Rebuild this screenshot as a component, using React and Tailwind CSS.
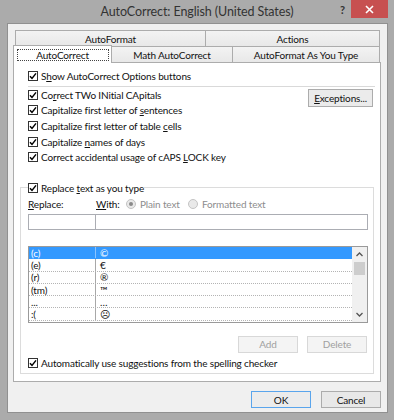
import React from "react";

function Box() {
  return (
    <span className="w-[10px] h-[10px] border border-[#333333] bg-white flex items-center justify-center shrink-0">
      <svg width="8" height="8" viewBox="0 0 8 8">
        <path d="M1 4.2 L3 6.4 L7 1.4" fill="none" stroke="#000" strokeWidth="1.5" />
      </svg>
    </span>
  );
}

function Check({ children, h = "h-[15.6px]" }) {
  return (
    <div className={"flex items-center " + h}>
      <Box />
      <span className="ml-[3px] leading-none whitespace-nowrap">{children}</span>
    </div>
  );
}

function Radio({ on }) {
  return (
    <span className="w-[10px] h-[10px] rounded-full border border-[#c4c4c4] bg-[#e9e9e9] flex items-center justify-center shrink-0">
      {on && <span className="w-[4px] h-[4px] rounded-full bg-[#8a8a8a]" />}
    </span>
  );
}

const rows = [
  ["(c)", "©"],
  ["(e)", "€"],
  ["(r)", "®"],
  ["(tm)", "™"],
  ["...", "…"],
  [":(", "☹"],
];

function Chevron({ up }) {
  return (
    <svg width="7" height="5" viewBox="0 0 7 5">
      <path d={up ? "M0.5 4 L3.5 1 L6.5 4" : "M0.5 1 L3.5 4 L6.5 1"} fill="none" stroke="#555" strokeWidth="1.3" />
    </svg>
  );
}

export default function App() {
  const tab = "border border-b-0 border-[#acacac] bg-linear-to-b from-[#f3f3f3] to-[#e8e8e8] flex items-center justify-center leading-none";
  return (
    <div className="w-[394px] h-[420px] bg-[#ababab] flex flex-col font-['Lato',sans-serif] text-[10px] tracking-[-0.15px] text-[#111]">
      {/* title bar */}
      <div className="h-[23px] grid grid-cols-[1fr_auto_1fr] items-start">
        <div />
        <div className="pt-[6px] text-[12.5px] tracking-[-0.1px] text-[#333] leading-none whitespace-nowrap">
          AutoCorrect: English (United States)
        </div>
        <div className="flex justify-end items-start pr-[6px]">
          <span className="mt-[4px] mr-[6px] text-[11px] font-bold text-[#333] leading-none">?</span>
          <div className="w-[37px] h-[18px] bg-[#c75050] flex items-center justify-center">
            <svg width="9" height="9" viewBox="0 0 9 9">
              <path d="M1 1 L8 8 M8 1 L1 8" stroke="#fff" strokeWidth="1.6" />
            </svg>
          </div>
        </div>
      </div>

      {/* content */}
      <div className="ml-[7px] w-[381px] h-[390px] border border-[#909090] bg-[#f0f0f0] pt-[6px] pl-[5px]">
        <div className="w-[368px]">
          {/* tab row 1 */}
          <div className="flex h-[16px] pl-[2px]">
            <div className={tab + " w-[191px]"}>AutoFormat</div>
            <div className={tab + " w-[174px] border-l-0"}>Actions</div>
          </div>
          {/* tab row 2 */}
          <div className="flex h-[16px] items-end">
            <div className="relative z-10 -mb-px w-[99px] h-[18px] bg-white border border-b-0 border-[#acacac] flex items-center justify-center">
              <span className="w-[92px] h-[12px] border border-dotted border-[#444] flex items-center justify-center leading-none">
                AutoCorrect
              </span>
            </div>
            <div className={tab + " w-[121px] h-[16px] border-l-0"}>Math AutoCorrect</div>
            <div className={tab + " w-[147px] h-[16px] border-l-0"}>AutoFormat As You Type</div>
          </div>
          {/* panel */}
          <div className="h-[320px] border border-[#acacac] bg-white pt-[5px] flex flex-col">
            <div className="pl-[14px]">
              <Check h="h-[16px]">
                S<u>h</u>ow AutoCorrect Options buttons
              </Check>
            </div>
            <div className="mt-[2px] ml-[14px] w-[347px] h-px bg-[#d9d9d9]" />
            <div className="flex">
              <div className="flex-1 pl-[14px] flex flex-col">
                <Check>
                  Co<u>r</u>rect TWo INitial CApitals
                </Check>
                <Check>
                  Capitalize first letter of <u>s</u>entences
                </Check>
                <Check>
                  Capitalize first letter of table <u>c</u>ells
                </Check>
                <Check>
                  Capitalize <u>n</u>ames of days
                </Check>
                <Check>
                  Correct accidental usage of cAPS <u>L</u>OCK key
                </Check>
              </div>
              <div className="mt-[2px] mr-[7px]">
                <div className="w-[65px] h-[18px] border border-[#acacac] bg-[#ebebeb] flex items-center justify-center leading-none">
                  <span>
                    <u>E</u>xceptions...
                  </span>
                </div>
              </div>
            </div>

            <fieldset className="mt-[15px] ml-[6px] w-[354px] border border-[#dcdcdc] pl-[7px] pr-[5px] pb-[3px]">
              <legend className="px-0">
                <Check h="h-[16px]">
                  Replace <u>t</u>ext as you type
                </Check>
              </legend>
              <div className="mt-[1px] h-[14px] flex items-center leading-none">
                <span className="w-[68px]">
                  <u>R</u>eplace:
                </span>
                <span className="w-[30px]">
                  <u>W</u>ith:
                </span>
                <Radio on />
                <span className="ml-[4px] w-[48px] text-[#8d8d8d]">Plain text</span>
                <Radio />
                <span className="ml-[4px] text-[#8d8d8d]">Formatted text</span>
              </div>
              <div className="mt-[3px] flex h-[16px]">
                <div className="w-[68px] border border-[#abadb3] bg-white" />
                <div className="w-[272px] border border-l-0 border-[#abadb3] bg-white" />
              </div>
              {/* list */}
              <div className="mt-[16px] w-[340px] h-[77px] border border-[#9a9a9a] bg-white flex">
                <div className="flex-1 flex flex-col">
                  {rows.map(([a, b], i) => (
                    <div
                      key={i}
                      className={
                        "h-[12.3px] flex leading-none border-b border-dotted " +
                        (i === 0 ? "bg-[#3399ff] text-white border-[#3399ff]" : "border-[#b4b4b4]")
                      }
                    >
                      <div
                        className={
                          "w-[67px] pl-[2px] flex items-center border-r " +
                          (i === 0 ? "border-[#8cc4ff]" : "border-[#a8a8a8]")
                        }
                      >
                        {a}
                      </div>
                      <div className="pl-[4px] flex items-center">{b}</div>
                    </div>
                  ))}
                </div>
                <div className="w-[15px] bg-[#f0f0f0] flex flex-col">
                  <div className="h-[15px] flex items-center justify-center">
                    <Chevron up />
                  </div>
                  <div className="flex-1">
                    <div className="ml-[2px] w-[11px] h-[13px] bg-[#cdcdcd]" />
                  </div>
                  <div className="h-[15px] flex items-center justify-center">
                    <Chevron />
                  </div>
                </div>
              </div>
              <div className="mt-[13px] flex justify-end gap-[9px] pr-[1px]">
                <div className="w-[60px] h-[17px] border border-[#d8d8d8] bg-[#f4f4f4] text-[#a0a0a0] flex items-center justify-center leading-none">
                  Add
                </div>
                <div className="w-[60px] h-[17px] border border-[#d8d8d8] bg-[#f4f4f4] text-[#a0a0a0] flex items-center justify-center leading-none">
                  Delete
                </div>
              </div>
              <div className="mt-[3px]">
                <Check h="h-[14px]">Automatically use suggestions from the spelling checker</Check>
              </div>
            </fieldset>
          </div>

          {/* bottom buttons */}
          <div className="mt-[9px] flex justify-end gap-[10px] pr-[6px] w-[374px]">
            <div className="w-[60px] h-[17px] border border-[#5aa5ec] bg-[#ececec] flex items-center justify-center leading-none">
              OK
            </div>
            <div className="w-[60px] h-[17px] border border-[#acacac] bg-[#e8e8e8] flex items-center justify-center leading-none">
              Cancel
            </div>
          </div>
        </div>
      </div>
    </div>
  );
}
